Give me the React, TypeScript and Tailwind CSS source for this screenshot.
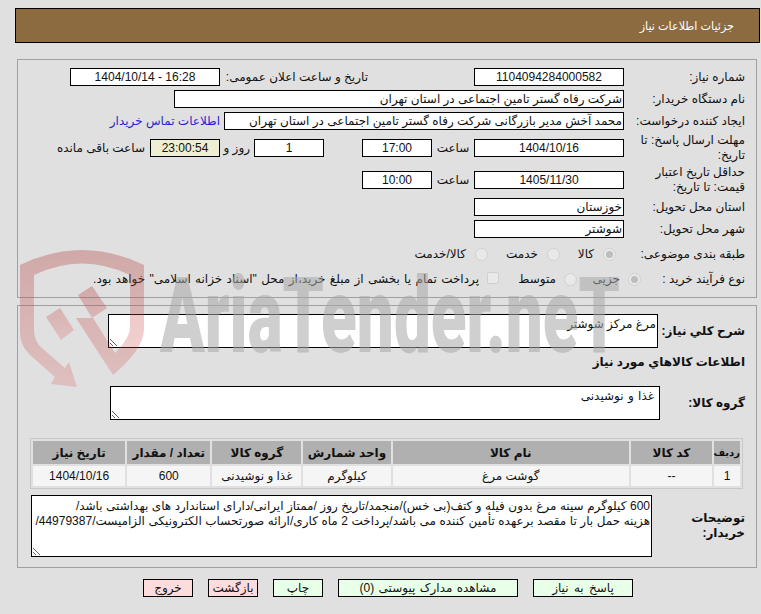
import React from 'react';

const Box = ({ w, children, cls = 'bg-white' }: { w: string; children?: React.ReactNode; cls?: string }) => (
    <div className={`${w} h-[18px] shrink-0 border border-black leading-[16px] text-center whitespace-nowrap overflow-hidden ${cls}`}>{children}</div>
);

const Radio = ({ checked }: { checked?: boolean }) => (
    <span className="w-[13px] h-[13px] shrink-0 rounded-full border border-[#d0d0d0] bg-[#e9e9e9] flex items-center justify-center">
        {checked && <span className="w-[7px] h-[7px] rounded-full bg-[#bdbdbd]" />}
    </span>
);

const Row = ({ label, labelW = 'w-[121px]', children, cls = 'mt-[4px]' }: { label: React.ReactNode; labelW?: string; children?: React.ReactNode; cls?: string }) => (
    <div className={`flex items-center h-[18px] ${cls}`}>
        <div className={`${labelW} shrink-0 leading-[15px] whitespace-nowrap`}>{label}</div>
        {children}
    </div>
);

const headers = ['ردیف', 'کد کالا', 'نام کالا', 'واحد شمارش', 'گروه کالا', 'تعداد / مقدار', 'تاریخ نیاز'];
const cells = ['1', '--', 'گوشت مرغ', 'کیلوگرم', 'غذا و نوشیدنی', '600', '1404/10/16'];

const Watermark = () => (
    <div dir="ltr" className="absolute inset-0 pointer-events-none">
        <svg width="761" height="614" viewBox="0 0 761 614">
            <defs>
                <linearGradient id="shield" x1="0" y1="0" x2="0" y2="1">
                    <stop offset="0" stopColor="#b03c3c" stopOpacity="0.34" />
                    <stop offset="1" stopColor="#d84a4a" stopOpacity="0.22" />
                </linearGradient>
            </defs>
            <path fill="url(#shield)" d="M20 265 Q82 235 144 265 L144 330 Q143 350 113 375 L76 318 L93 318 L115 353 Q130 338 130 327 L130 275 Q82 252 34 275 L34 330 Q34 342 43 349 L65 368 L69 362 L77 387 L51 384 L55 377 L30 355 Q20 345 20 333 Z" />
            <path fill="url(#shield)" d="M46 317 L60 308 L74 330 L61 340 Z M78 295 L92 286 L107 308 L92 318 Z" />
            <text x="160" y="352" fontFamily="Roboto" fontWeight="900" fontSize="106" fill="#a8a8a8" opacity="0.55" textLength="460" lengthAdjust="spacingAndGlyphs">AriaTender.neT</text>
        </svg>
    </div>
);

export default function App() {
    return (
        <div dir="rtl" className="relative w-[761px] h-[614px] overflow-hidden bg-[#e0e0e0] text-[12px] text-[#111] font-['Liberation_Sans','DejaVu_Sans',sans-serif]">
            {/* Header */}
            <div className="mt-[8px] ml-[15px] mr-[1px] h-[35px] pr-[25px] pt-[1px] border border-black bg-[#8b6b3f] text-white text-[11.2px] flex items-center">
                جزئیات اطلاعات نیاز
            </div>

            {/* Details */}
            <div className="mt-[16px] ml-[17px] mr-[4px] h-[239px] pr-[11px] border border-[#a0a0a0] pt-[8px]">
                <Row label="شماره نیاز:" cls="">
                    <Box w="w-[150px]">1104094284000582</Box>
                    <div className="w-[148px] mr-[106px] shrink-0 whitespace-nowrap">تاریخ و ساعت اعلان عمومی:</div>
                    <Box w="w-[150px]"><span dir="ltr">1404/10/14 - 16:28</span></Box>
                </Row>
                <Row label="نام دستگاه خریدار:">
                    <Box w="w-[450px]" cls="bg-white text-right pr-[1px]">شرکت رفاه گستر تامین اجتماعی در استان تهران</Box>
                </Row>
                <Row label="ایجاد کننده درخواست:">
                    <Box w="w-[400px]" cls="bg-white text-right pr-[1px]">محمد آخش مدیر بازرگانی شرکت رفاه گستر تامین اجتماعی در استان تهران</Box>
                    <a className="mr-[4px] text-[#2a1fd0] whitespace-nowrap">اطلاعات تماس خریدار</a>
                </Row>
                <Row label={<>مهلت ارسال پاسخ: تا<br />تاریخ:</>} cls="mt-[9px]">
                    <Box w="w-[150px]">1404/10/16</Box>
                    <span className="w-[42px] shrink-0 text-center">ساعت</span>
                    <Box w="w-[70px]">17:00</Box>
                    <span className="w-[38px] shrink-0" />
                    <Box w="w-[70px]">1</Box>
                    <span className="w-[34px] shrink-0 pr-[4px]">روز و</span>
                    <Box w="w-[70px]" cls="bg-[#eeeed2]">23:00:54</Box>
                    <span className="mr-[5px] whitespace-nowrap">ساعت باقی مانده</span>
                </Row>
                <Row label={<>حداقل تاریخ اعتبار<br />قیمت: تا تاریخ:</>} cls="mt-[14px]">
                    <Box w="w-[150px]">1405/11/30</Box>
                    <span className="w-[42px] shrink-0 text-center">ساعت</span>
                    <Box w="w-[70px]">10:00</Box>
                </Row>
                <Row label="استان محل تحویل:" cls="mt-[9px]">
                    <Box w="w-[150px]" cls="bg-white text-right pr-[1px]">خوزستان</Box>
                </Row>
                <Row label="شهر محل تحویل:">
                    <Box w="w-[150px]" cls="bg-white text-right pr-[1px]">شوشتر</Box>
                </Row>
                <Row label="طبقه بندی موضوعی:" cls="mt-[7px]">
                    <div className="w-[8px] shrink-0" />
                    <div className="w-[56px] shrink-0 flex items-center gap-[9px]"><Radio checked /><span>کالا</span></div>
                    <div className="w-[72px] shrink-0 flex items-center gap-[9px]"><Radio /><span>خدمت</span></div>
                    <div className="flex items-center gap-[9px]"><Radio /><span>کالا/خدمت</span></div>
                </Row>
                <Row label="نوع فرآیند خرید :" labelW="w-[104px]" cls="mt-[7px]">
                    <div className="w-[64px] shrink-0 flex items-center gap-[8px]"><Radio checked /><span>جزیی</span></div>
                    <div className="w-[78px] shrink-0 flex items-center gap-[8px]"><Radio /><span>متوسط</span></div>
                    <span className="w-[12px] h-[12px] shrink-0 rounded-[2px] border border-[#d0d0d0] bg-[#e9e9e9] relative -top-[1px]" />
                    <span className="mr-[8px] whitespace-nowrap [word-spacing:1px]">پرداخت تمام یا بخشی از مبلغ خرید،از محل "اسناد خزانه اسلامی" خواهد بود.</span>
                </Row>
            </div>

            {/* Items */}
            <div className="mt-[7px] ml-[17px] mr-[4px] h-[263px] pr-[11px] border border-[#a0a0a0] pt-[8px]">
                <div className="flex items-center h-[34px]">
                    <div className="w-[87px] shrink-0 font-bold">شرح کلي نياز:</div>
                    <textarea readOnly dir="rtl" value="مرغ مرکز شوشتر" className="w-[550px] h-[34px] border border-black bg-white px-[1px] py-[2px] leading-[15px] outline-none" />
                </div>
                <div className="mt-[6px] h-[16px] leading-[16px] font-bold">اطلاعات کالاهاي مورد نياز</div>
                <div className="mt-[16px] flex items-center h-[34px]">
                    <div className="w-[85px] shrink-0 font-bold">گروه کالا:</div>
                    <textarea readOnly dir="rtl" value="غذا و نوشیدنی" className="w-[550px] h-[34px] border border-black bg-white pr-[5px] pl-[1px] py-[2px] leading-[15px] outline-none [word-spacing:1px]" />
                </div>
                <table className="mt-[18px] mr-[2px] w-[713px] table-fixed border-separate border-spacing-[2px] border border-[#c8c8c8]">
                    <colgroup>
                        <col className="w-[26px]" />
                        <col className="w-[81px]" />
                        <col className="w-[236px]" />
                        <col className="w-[87px]" />
                        <col className="w-[89px]" />
                        <col className="w-[83px]" />
                        <col className="w-[92px]" />
                    </colgroup>
                    <thead>
                        <tr>
                            {headers.map(h => (
                                <th key={h} className={`h-[23px] p-0 bg-[#b0b0b0] font-bold text-center whitespace-nowrap ${h === 'ردیف' ? 'text-[10px]' : ''}`}>{h}</th>
                            ))}
                        </tr>
                    </thead>
                    <tbody>
                        <tr>
                            {cells.map(c => (
                                <td key={c} className="h-[20px] p-0 bg-[#f5f5f5] text-center whitespace-nowrap">{c}</td>
                            ))}
                        </tr>
                    </tbody>
                </table>
                <div className="mt-[6px] flex items-center h-[62px]">
                    <div className="w-[93px] shrink-0 font-bold leading-[15px]">توضیحات<br />خریدار:</div>
                    <textarea
                        readOnly
                        dir="rtl"
                        wrap="off"
                        value={'600 کیلوگرم سینه مرغ بدون فیله و کتف(بی خس)/منجمد/تاریخ روز /ممتاز ایرانی/دارای استاندارد های بهداشتی باشد/\nهزینه حمل بار تا مقصد برعهده تأمین کننده می باشد/پرداخت 2 ماه کاری/ارائه صورتحساب الکترونیکی الزامیست/44979387/'}
                        className="w-[621px] h-[62px] border border-black bg-white px-[1px] py-[3px] leading-[15px] outline-none overflow-hidden [word-spacing:0.2px]"
                    />
                </div>
            </div>

            {/* Actions */}
            <div className="mt-[10px] mr-[128px] flex gap-[15px] pt-[0.5px]">
                <button className="w-[100px] h-[18px] border border-black bg-[#e8ffe8] leading-[16px] [word-spacing:2px]">پاسخ به نیاز</button>
                <button className="w-[180px] h-[18px] border border-black bg-[#e8ffe8] leading-[16px] [word-spacing:1px]">مشاهده مدارک پیوستی (0)</button>
                <button className="w-[50px] h-[18px] border border-black bg-[#e8ffe8] leading-[16px]">چاپ</button>
                <button className="w-[50px] h-[18px] border border-black bg-[#ffdcdc] leading-[16px]">بازگشت</button>
                <button className="w-[50px] h-[18px] border border-black bg-[#ffdcdc] leading-[16px]">خروج</button>
            </div>

            <Watermark />
        </div>
    );
}
